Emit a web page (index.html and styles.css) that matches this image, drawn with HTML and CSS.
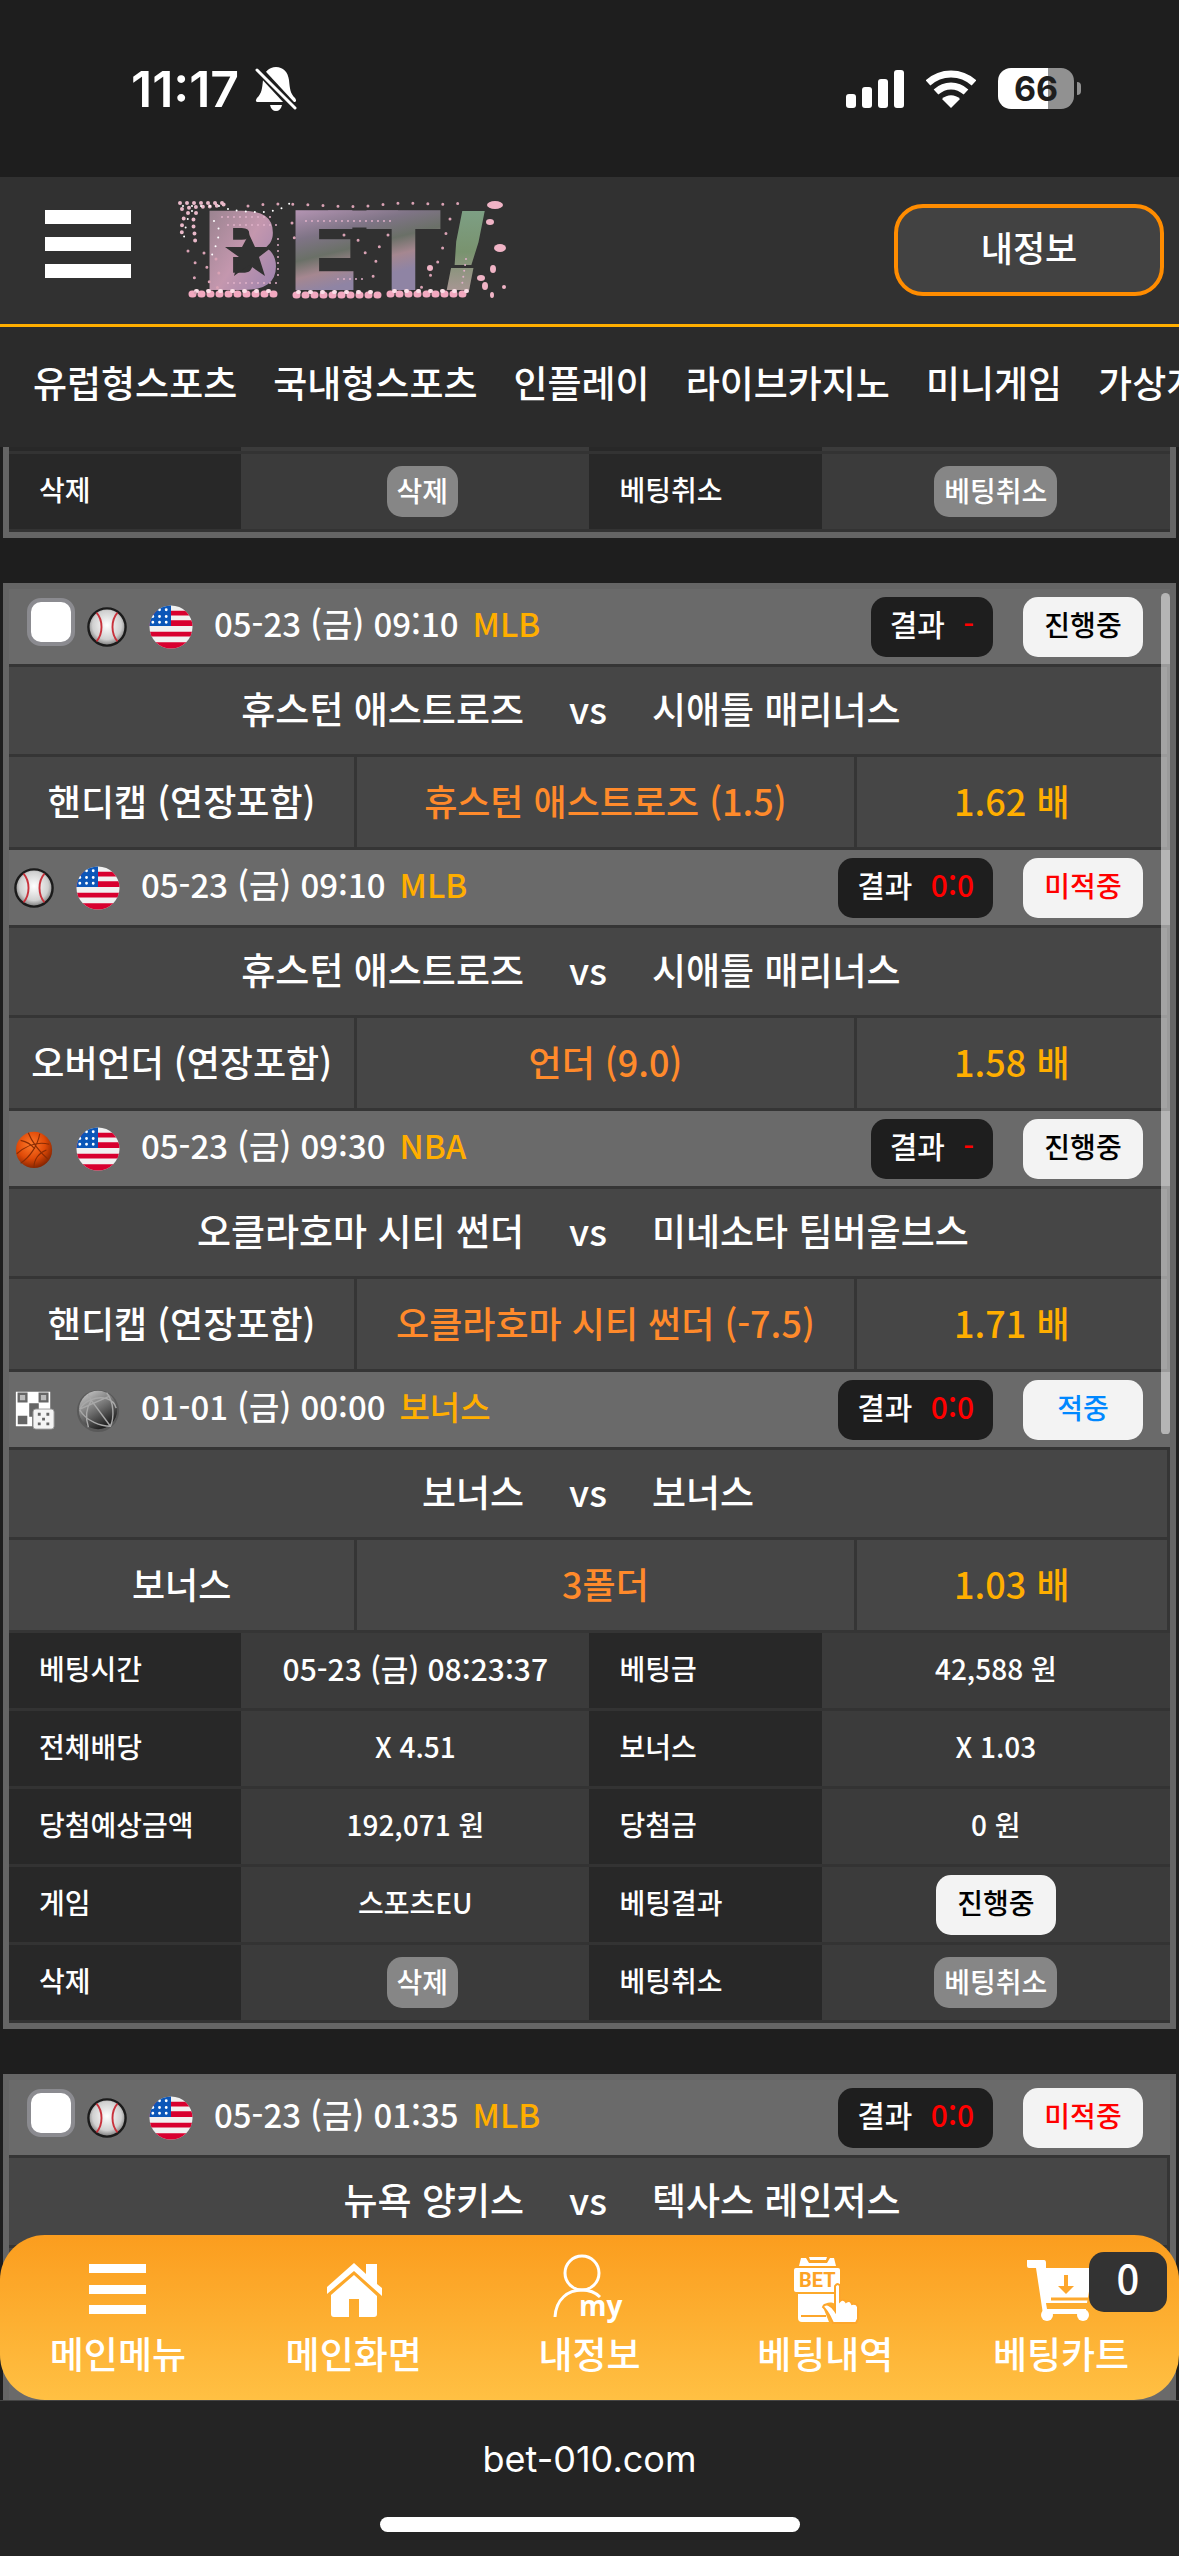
FILE: index.html
```html
<!DOCTYPE html>
<html lang="ko">
<head>
  <meta charset="UTF-8" />
  <meta name="viewport" content="width=device-width, initial-scale=1.0"/>
  <title>베팅내역</title>
  <link rel="stylesheet" href="styles.css">
</head>
<body>

  <!-- icon sprites -->
  <svg width="0" height="0" class="sprites" aria-hidden="true">
    <defs>
      <radialGradient id="ballFill" cx="50%" cy="45%" r="55%">
        <stop offset="0" stop-color="#fff"/>
        <stop offset="0.7" stop-color="#d0d0d0"/>
        <stop offset="1" stop-color="#777"/>
      </radialGradient>
      <radialGradient id="hoopFill" cx="42%" cy="35%" r="65%">
        <stop offset="0" stop-color="#ff7a2a"/>
        <stop offset="0.6" stop-color="#e04a08"/>
        <stop offset="1" stop-color="#8a2600"/>
      </radialGradient>
      <linearGradient id="globeFill" x1="0.2" y1="0" x2="0.8" y2="1">
        <stop offset="0" stop-color="#c4c4c4"/>
        <stop offset="0.5" stop-color="#6a6a6a"/>
        <stop offset="1" stop-color="#0a0a0a"/>
      </linearGradient>
      <clipPath id="flagClip"><circle cx="23" cy="23" r="22.5"/></clipPath>
    </defs>
    <symbol id="baseball" viewBox="0 0 44 44">
      <circle cx="22" cy="22" r="19.5" fill="url(#ballFill)" stroke="#1b1b1b" stroke-width="2.5"/>
      <path d="M11 7c7 8 7 22 0 30M33 7c-7 8-7 22 0 30" fill="none" stroke="#c8323c" stroke-width="2"/>
    </symbol>
    <symbol id="basketball" viewBox="0 0 44 44">
      <circle cx="22" cy="23" r="19" fill="url(#hoopFill)"/>
      <path d="M4 27c10-9 22-13 34-10M16 5c4 10 13 21 21 28M28 6c-2 12-10 24-20 31M8 13c5 1 11 4 15 9M22 41c0-8 5-15 13-18" fill="none" stroke="#8a2c04" stroke-width="1.2"/>
    </symbol>
    <symbol id="dice" viewBox="0 0 44 44">
      <path d="M3 3h36v18H20v18H3z" fill="#fff"/>
      <path d="M6 5h8v8H6zM28 5h8v8h-8z" fill="#bbb" stroke="#666" stroke-width="2.5"/>
      <path d="M5 28h10v9H5zM17 15h10v8h-6v6h-4z" fill="#666"/>
      <rect x="21" y="21" width="22" height="21" rx="3" fill="#f4f4f4" stroke="#999" stroke-width="1"/>
      <path d="M26 25h3v3h-3zM35 25h3v3h-3zM30.5 30h3v3h-3zM26 35h3v3h-3zM35 35h3v3h-3z" fill="#666"/>
    </symbol>
    <symbol id="globe" viewBox="0 0 46 46">
      <circle cx="23" cy="24" r="22" fill="#4e4e4e" opacity="0.6"/>
      <circle cx="23" cy="23" r="20" fill="url(#globeFill)"/>
      <path d="M4 22c4-8 17-14 28-11 6 2 9 6 10 10M16 13l20 27M4 22l30-13M16 13c-6 9-6 19-3 28M16 13l-3-6M32 5c8 10 8 26 4 35-10 0-25-5-32-17" fill="none" stroke="#a8a8a8" stroke-width="1.5"/>
    </symbol>
    <symbol id="usa" viewBox="0 0 46 46">
      <g clip-path="url(#flagClip)">
        <path fill="#f1f1f1" d="M0 0h46v46H0z"/>
        <path fill="#d8002f" d="M0 6h46v5H0zM0 16h46v6H0zM0 28h46v5H0zM0 39h46v7H0z"/>
        <path fill="#0b56b8" d="M0 0h23v22H0z"/>
        <path fill="none" stroke="#fff" stroke-width="3" stroke-linecap="round" stroke-dasharray="0 7" d="M4 5h18M4 12h18M4 18h18"/>
      </g>
    </symbol>
  </svg>

  <div class="status-bar">
    <div class="status-left">
      <span class="clock">11:17</span>
      <svg class="bell" viewBox="0 0 42 44">
        <path fill="#fff" d="M21 0c7 0 12 5 13 13 1 9 1 13 6 18 2 3 1 4-1 4H3c-2 0-3-1-1-4 5-5 5-9 6-18C9 5 14 0 21 0zM15 38h12c-1 4-3 6-6 6s-5-2-6-6z"/>
        <path stroke="#1e1e1e" stroke-width="8" d="M2 1l38 41"/>
        <path stroke="#fff" stroke-width="3" stroke-linecap="round" d="M2 3l38 38"/>
      </svg>
    </div>
    <div class="status-right">
      <svg class="signal" viewBox="0 0 58 38" fill="#fff">
        <rect x="0" y="24" width="10" height="14" rx="3"/>
        <rect x="16" y="17" width="10" height="21" rx="3"/>
        <rect x="32" y="9" width="10" height="29" rx="3"/>
        <rect x="48" y="0" width="10" height="38" rx="3"/>
      </svg>
      <svg class="wifi" viewBox="0 0 50 38" fill="none" stroke="#fff" stroke-width="7">
        <path d="M2 13c13-12 33-12 46 0"/>
        <path d="M10 22c9-8 21-8 30 0"/>
        <path fill="#fff" stroke="none" d="M16 29c5-5 13-5 18 0l-9 9z"/>
      </svg>
      <div class="battery"><span>66</span></div>
    </div>
  </div>

  <header class="header">
    <button class="menu-btn" aria-label="메뉴"><i></i><i></i><i></i></button>
    <a href="#" class="logo" aria-label="BET!">
      <svg viewBox="0 0 328 104">
        <defs>
          <linearGradient id="sakura" gradientUnits="userSpaceOnUse" x1="120" y1="10" x2="140" y2="92">
            <stop offset="0" stop-color="#b595b4"/>
            <stop offset="0.35" stop-color="#7f7486"/>
            <stop offset="0.6" stop-color="#6a7067"/>
            <stop offset="0.8" stop-color="#a58790"/>
            <stop offset="1" stop-color="#8f84a4"/>
          </linearGradient>
          <linearGradient id="sakuraB" x1="0" y1="0" x2="1" y2="1">
            <stop offset="0" stop-color="#8d7d86"/>
            <stop offset="0.5" stop-color="#c497ae"/>
            <stop offset="1" stop-color="#8f7cae"/>
          </linearGradient>
          <linearGradient id="meadow" x1="0" y1="0" x2="0" y2="1">
            <stop offset="0" stop-color="#7fa58e"/>
            <stop offset="0.5" stop-color="#79936f"/>
            <stop offset="1" stop-color="#c298a8"/>
          </linearGradient>
        </defs>
        <g class="logo-text">
          <text x="24" y="89" fill="url(#sakuraB)" stroke="url(#sakuraB)">B</text>
          <text x="110" y="89" fill="url(#sakura)" stroke="url(#sakura)">E</text>
          <text x="190" y="89" fill="url(#sakura)" stroke="url(#sakura)">T</text>
          <text x="264" y="89" class="lean" fill="url(#meadow)" stroke="url(#meadow)">!</text>
        </g>
        <path fill="url(#sakura)" d="M150 11.5h70v17h-70z"/>
        <path fill="#313131" d="M71 35l6 13h17l-13 10 6 19-16-11-15 11 5-19-14-10h17z"/>
        <g fill="none" stroke-linecap="round">
          <path stroke="#f2a9c0" stroke-width="7" stroke-dasharray="1 8" d="M14 95h82M118 96h84M212 95h80"/>
          <path stroke="#fbdde6" stroke-width="4" stroke-dasharray="1 11" d="M18 92h78M120 93h80M216 92h78"/>
          <path stroke="#e9b9c9" stroke-width="4" stroke-dasharray="0 7" d="M2 4h48M4 10c16-4 30 0 46-6M10 14c-8 6-6 18-6 26M18 14c-6 8 0 20-1 30"/>
          <path stroke="#fff" stroke-width="2" stroke-dasharray="0 9" d="M5 7h40M14 12c-6 8-6 16-8 26M50 10c20 4 50 6 62-6M36 22c10 8 2 24-2 34"/>
          <path stroke="#d9a2b4" stroke-width="3" stroke-dasharray="0 15" d="M70 7c40-6 90 4 130-1s60 2 84-2M10 52c14 2 2 30 8 44M26 54c-4 12 10 14 4 34M38 60c10 14-4 16 2 30M114 24l4 26M272 20c-8 22-4 40-30 70M166 36c20 4 20 12 22 22M210 36c-14 10-10 30-18 52"/>
          <path stroke="#dfb0c8" stroke-width="2" stroke-dasharray="0 6" d="M44 18h50M50 26h54M100 40v40M50 84h50M160 80h30M128 22h90M288 60l-4 26"/>
        </g>
        <g fill="#f0b4c6">
          <ellipse cx="317" cy="6" rx="8" ry="4"/>
          <ellipse cx="312" cy="23" rx="4" ry="3"/>
          <ellipse cx="322" cy="49" rx="6" ry="4"/>
          <ellipse cx="315" cy="70" rx="3" ry="4"/>
          <ellipse cx="307" cy="87" rx="3" ry="4"/>
          <ellipse cx="314" cy="96" rx="2" ry="3"/>
          <ellipse cx="326" cy="88" rx="2" ry="2"/>
          <ellipse cx="252" cy="69" rx="3" ry="3"/>
          <ellipse cx="303" cy="79" rx="4" ry="3"/>
        </g>
      </svg>
    </a>
    <button class="my-btn">내정보</button>
  </header>

  <nav class="game-nav">
    <a href="#">유럽형스포츠</a>
    <a href="#">국내형스포츠</a>
    <a href="#">인플레이</a>
    <a href="#">라이브카지노</a>
    <a href="#">미니게임</a>
    <a href="#">가상게임</a>
  </nav>

  <main class="content">
    <div class="bet-list">

      <section class="slip slip-cut">
        <table class="info">
          <tr class="tail"><th></th><td></td><th></th><td></td></tr>
          <tr>
            <th>삭제</th><td><button class="gray-btn delete">삭제</button></td>
            <th>베팅취소</th><td><button class="gray-btn">베팅취소</button></td>
          </tr>
        </table>
      </section>

      <section class="slip">
        <div class="game-head">
          <input type="checkbox" class="check" aria-label="선택">
          <svg class="sport"><use href="#baseball"/></svg>
          <svg class="flag"><use href="#usa"/></svg>
          <span class="date">05-23 (금) 09:10</span>
          <span class="league">MLB</span>
          <span class="result">결과 <b>-</b></span>
          <span class="state">진행중</span>
        </div>
        <div class="teams"><span class="home">휴스턴 애스트로즈</span><span class="vs">vs</span><span>시애틀 매리너스</span></div>
        <div class="pick"><span>핸디캡 (연장포함)</span><span class="choice">휴스턴 애스트로즈 (1.5)</span><span class="odds">1.62 배</span></div>

        <div class="game-head">
          <svg class="sport"><use href="#baseball"/></svg>
          <svg class="flag"><use href="#usa"/></svg>
          <span class="date">05-23 (금) 09:10</span>
          <span class="league">MLB</span>
          <span class="result">결과 <b>0:0</b></span>
          <span class="state lose">미적중</span>
        </div>
        <div class="teams"><span class="home">휴스턴 애스트로즈</span><span class="vs">vs</span><span>시애틀 매리너스</span></div>
        <div class="pick"><span>오버언더 (연장포함)</span><span class="choice">언더 (9.0)</span><span class="odds">1.58 배</span></div>

        <div class="game-head">
          <svg class="sport"><use href="#basketball"/></svg>
          <svg class="flag"><use href="#usa"/></svg>
          <span class="date">05-23 (금) 09:30</span>
          <span class="league">NBA</span>
          <span class="result">결과 <b>-</b></span>
          <span class="state">진행중</span>
        </div>
        <div class="teams"><span class="home">오클라호마 시티 썬더</span><span class="vs">vs</span><span>미네소타 팀버울브스</span></div>
        <div class="pick"><span>핸디캡 (연장포함)</span><span class="choice">오클라호마 시티 썬더 (-7.5)</span><span class="odds">1.71 배</span></div>

        <div class="game-head">
          <svg class="sport"><use href="#dice"/></svg>
          <svg class="flag"><use href="#globe"/></svg>
          <span class="date">01-01 (금) 00:00</span>
          <span class="league">보너스</span>
          <span class="result">결과 <b>0:0</b></span>
          <span class="state win">적중</span>
        </div>
        <div class="teams"><span class="home">보너스</span><span class="vs">vs</span><span>보너스</span></div>
        <div class="pick"><span>보너스</span><span class="choice">3폴더</span><span class="odds">1.03 배</span></div>

        <table class="info">
          <tr><th>베팅시간</th><td class="time">05-23 (금) 08:23:37</td><th>베팅금</th><td>42,588 원</td></tr>
          <tr><th>전체배당</th><td>X 4.51</td><th>보너스</th><td>X 1.03</td></tr>
          <tr><th>당첨예상금액</th><td>192,071 원</td><th>당첨금</th><td>0 원</td></tr>
          <tr><th>게임</th><td>스포츠EU</td><th>베팅결과</th><td><span class="state">진행중</span></td></tr>
          <tr>
            <th>삭제</th><td><button class="gray-btn delete">삭제</button></td>
            <th>베팅취소</th><td><button class="gray-btn">베팅취소</button></td>
          </tr>
        </table>
        <div class="scroll-thumb"></div>
      </section>

      <section class="slip">
        <div class="game-head">
          <input type="checkbox" class="check" aria-label="선택">
          <svg class="sport"><use href="#baseball"/></svg>
          <svg class="flag"><use href="#usa"/></svg>
          <span class="date">05-23 (금) 01:35</span>
          <span class="league">MLB</span>
          <span class="result">결과 <b>0:0</b></span>
          <span class="state lose">미적중</span>
        </div>
        <div class="teams"><span class="home">뉴욕 양키스</span><span class="vs">vs</span><span>텍사스 레인저스</span></div>
        <div class="pick"><span></span><span></span><span></span></div>
        <div class="game-head"></div>
      </section>

    </div>

    <nav class="tab-bar">
      <a href="#">
        <svg viewBox="0 0 72 72" fill="#fff"><path d="M7 11h57v9H7zM7 32h57v9H7zM7 52h57v9H7z"/></svg>
        메인메뉴
      </a>
      <a href="#">
        <svg viewBox="0 0 72 72" fill="#fff"><path d="M9 34l27-24 12 11V11h11v20l5 4v8L36 18 9 41z"/><path d="M36 22l23 21v18q0 3-3 3H41V46H31v18H16q-3 0-3-3V42z"/></svg>
        메인화면
      </a>
      <a href="#">
        <svg viewBox="0 0 72 72" fill="none" stroke="#fff" stroke-width="3"><circle cx="29" cy="20" r="17"/><path d="M2 64c1-18 13-27 27-27 7 0 14 3 18 7"/><text x="26" y="63" class="my-text">my</text></svg>
        내정보
      </a>
      <a href="#">
        <svg viewBox="0 0 72 72" fill="#fff">
          <path d="M10 13l2-8h5l3 5h18l3-5h4l2 8zM20 4h18l-1 3H21zM7 15h42q2 0 2 2v14c-4 0-5 3-5 8H7q-2 0-2-2V17q0-2 2-2z"/>
          <path d="M9 41h37v10c-5-3-10-1-12 3l6 15H13q-4 0-4-4z"/>
          <path stroke="#fda62b" stroke-width="2" d="M12 63h25"/>
          <path stroke="#fda62b" stroke-width="2" d="M44 70c-3-6-5-12-10-16 2-5 8-2 12 4V33q3-4 5 0v15q3-3 6 1 4-3 6 2 5-1 6 3v12l-2 4z"/>
          <text x="10" y="34" class="bet-text">BET</text>
        </svg>
        베팅내역
      </a>
      <a href="#">
        <svg viewBox="0 0 72 72" fill="#fff">
          <path d="M2 7h17q2 0 2 3v5h47l-6 35H21l1 6h39v5H18L11 15H4q-2 0-2-2z"/>
          <path stroke="#fda92e" stroke-width="3" d="M26 46h37"/>
          <path fill="#fda62b" d="M39 22h4v11h6l-8 8-8-8h6z"/>
          <circle cx="22" cy="62" r="6"/><circle cx="58" cy="62" r="6"/>
        </svg>
        베팅카트
        <span class="cart-count">0</span>
      </a>
    </nav>
  </main>

  <footer class="browser-bar">
    <span>bet-010.com</span>
    <div class="home-indicator"></div>
  </footer>

</body>
</html>
```
FILE: styles.css
```css
* {
  box-sizing: border-box;
}

body {
  margin: 0;
  height: 100vh;
  display: flex;
  flex-direction: column;
  overflow: hidden;
  background: #1e1e1e;
  color: #fff;
  font-family: "Noto Sans CJK KR", sans-serif;
  font-weight: 500;
}

a {
  color: inherit;
  text-decoration: none;
}

button {
  font-family: inherit;
  font-weight: inherit;
  color: inherit;
  border: none;
  cursor: pointer;
}

.sprites {
  position: absolute;
}

/* status bar */
.status-bar {
  flex: none;
  height: 177px;
  padding: 0 105px 0 131px;
  display: flex;
  justify-content: space-between;
  align-items: center;
}

.status-left,
.status-right {
  display: flex;
  align-items: center;
}

.status-left {
  gap: 16px;
}

.status-right {
  gap: 22px;
}

.clock {
  font-family: Inter, sans-serif;
  font-weight: 600;
  font-size: 50px;
}

.bell {
  width: 42px;
  height: 44px;
}

.signal {
  width: 58px;
  height: 38px;
}

.wifi {
  width: 50px;
  height: 38px;
}

.battery {
  position: relative;
  width: 76px;
  height: 41px;
  border-radius: 13px;
  background: linear-gradient(90deg, #fff 66%, #919191 66%);
  color: #1e1e1e;
  font: 700 34px/41px Inter, sans-serif;
  text-align: center;
}

.battery::after {
  content: "";
  position: absolute;
  right: -7px;
  top: 14px;
  width: 4px;
  height: 13px;
  border-radius: 0 4px 4px 0;
  background: #919191;
}

/* header */
.header {
  flex: none;
  height: 150px;
  padding: 0 15px 0 45px;
  display: flex;
  align-items: center;
  background: #313131;
  border-bottom: 3px solid #ffae00;
}

.menu-btn {
  width: 86px;
  padding: 0;
  margin-bottom: 14px;
  display: flex;
  flex-direction: column;
  gap: 13px;
  background: none;
}

.menu-btn i {
  height: 14px;
  background: #fff;
}

.logo {
  display: flex;
  margin-left: 47px;
}

.logo svg {
  width: 328px;
  height: 104px;
  overflow: visible;
}

.logo-text {
  font-family: "DejaVu Sans", sans-serif;
  font-weight: 700;
  font-size: 104px;
  stroke-width: 4px;
}

.logo-text .lean {
  font-style: italic;
}

.my-btn {
  width: 270px;
  height: 92px;
  margin-left: auto;
  margin-bottom: 2px;
  padding-bottom: 8px;
  border: 4px solid #ff8c00;
  border-radius: 29px;
  background: #424242;
  font-size: 35px;
}

/* game categories */
.game-nav {
  flex: none;
  height: 120px;
  padding: 0 0 10px 33px;
  display: flex;
  align-items: center;
  gap: 36px;
  overflow: hidden;
  white-space: nowrap;
  background: #2b2b2b;
  font-size: 37px;
}

/* slips */
.content {
  position: relative;
  flex: 1;
  min-height: 0;
}

.bet-list {
  height: 100%;
  padding: 0 3px;
  overflow: hidden;
}

.slip {
  position: relative;
  margin-bottom: 45px;
  border: 6px solid #656565;
}

.slip-cut {
  border-top: none;
}

.game-head {
  height: 78px;
  padding: 0 27px 0 4px;
  display: flex;
  align-items: center;
  background: #6a6a6a;
  border-bottom: 3px solid #353535;
  font-size: 33px;
}

.check {
  appearance: none;
  width: 48px;
  height: 48px;
  margin: 0 11px 10px 14px;
  background: #fff;
  border: 4px solid #8b8b90;
  border-radius: 14px;
}

.sport,
.flag {
  flex: none;
  height: 44px;
}

.sport {
  width: 42px;
}

.flag {
  width: 46px;
  margin: 0 20px;
}

.date,
.league {
  padding-bottom: 8px;
}

.league {
  margin-left: 14px;
  color: #ffae00;
}

.result,
.state {
  height: 60px;
  border-radius: 15px;
  line-height: 54px;
}

.result {
  margin-left: auto;
  padding: 0 19px;
  background: #1e1e1e;
  font-size: 30px;
  line-height: 52px;
}

.result b {
  margin-left: 10px;
  font-weight: 500;
  color: #ff0000;
}

.state {
  display: inline-block;
  width: 120px;
  margin-left: 30px;
  background: #f3f3f3;
  color: #000;
  font-size: 28px;
  text-align: center;
}

.state.lose {
  color: #ff0000;
}

.state.win {
  color: #0088ff;
}

.teams {
  height: 90px;
  padding-bottom: 6px;
  display: grid;
  grid-template-columns: 1fr 128px 1fr;
  align-items: center;
  background: #464646;
  border: solid #353535;
  border-width: 0 3px 3px 0;
  font-size: 37px;
}

.teams .home {
  text-align: right;
}

.teams .vs {
  text-align: center;
}

.pick {
  height: 93px;
  display: grid;
  grid-template-columns: 30% 43% 27%;
  background: #464646;
  border-bottom: 3px solid #353535;
  font-size: 36px;
  line-height: 86px;
  text-align: center;
  white-space: nowrap;
}

.pick span {
  border-right: 3px solid #353535;
}

.pick .choice {
  color: #ff8a2b;
}

.pick .odds {
  color: #ffae00;
}

/* slip summary */
.info {
  width: 100%;
  table-layout: fixed;
  border-spacing: 0;
  font-size: 28px;
}

.info th,
.info td {
  height: 78px;
  padding: 0 0 6px;
  border-bottom: 3px solid #333;
  line-height: 40px;
}

.info th {
  width: 20%;
  padding-left: 30px;
  background: #282828;
  font-weight: 500;
  text-align: left;
}

.info td {
  width: 30%;
  background: #3b3b3b;
  text-align: center;
}

.info td:has(.state),
.info td:has(.gray-btn) {
  padding: 0;
}

.info .tail th,
.info .tail td {
  height: 7px;
  padding: 0;
}

.info .time {
  font-size: 30px;
}

.info .state {
  margin: 0;
  line-height: 54px;
  vertical-align: middle;
}

.gray-btn {
  height: 51px;
  padding: 0 10px 4px;
  border-radius: 15px;
  background: #868686;
  font-size: 28px;
  line-height: 40px;
  vertical-align: middle;
}

.gray-btn.delete {
  margin-left: 14px;
}

.scroll-thumb {
  position: absolute;
  top: 4px;
  right: 0;
  width: 9px;
  height: 841px;
  border-radius: 5px 5px 4px 4px;
  background: rgba(255, 255, 255, 0.5);
}

/* bottom tabs */
.tab-bar {
  position: absolute;
  left: 0;
  right: 0;
  bottom: 0;
  height: 165px;
  padding-top: 18px;
  display: grid;
  grid-template-columns: repeat(5, 1fr);
  border-radius: 45px;
  background: linear-gradient(#fb9d1e, #ffc043);
}

.tab-bar a {
  position: relative;
  display: flex;
  flex-direction: column;
  align-items: center;
  gap: 6px;
  font-size: 37px;
  line-height: 44px;
}

.tab-bar svg {
  width: 72px;
  height: 72px;
}

.my-text {
  fill: #fff;
  stroke: none;
  font: 700 28px "Open Sans", sans-serif;
}

.bet-text {
  fill: #fda326;
  font: 700 20px Roboto, sans-serif;
}

.cart-count {
  position: absolute;
  top: -1px;
  right: 12px;
  width: 78px;
  height: 60px;
  border-radius: 15px;
  background: #333;
  font-size: 40px;
  line-height: 50px;
  text-align: center;
}

/* browser footer */
.browser-bar {
  flex: none;
  height: 156px;
  padding: 32px 0 24px;
  display: flex;
  flex-direction: column;
  align-items: center;
  justify-content: space-between;
  background: #242424;
  border-top: 1px solid #444;
  font: 36px/52px Inter, sans-serif;
}

.home-indicator {
  width: 420px;
  height: 15px;
  border-radius: 8px;
  background: #fff;
}
```
